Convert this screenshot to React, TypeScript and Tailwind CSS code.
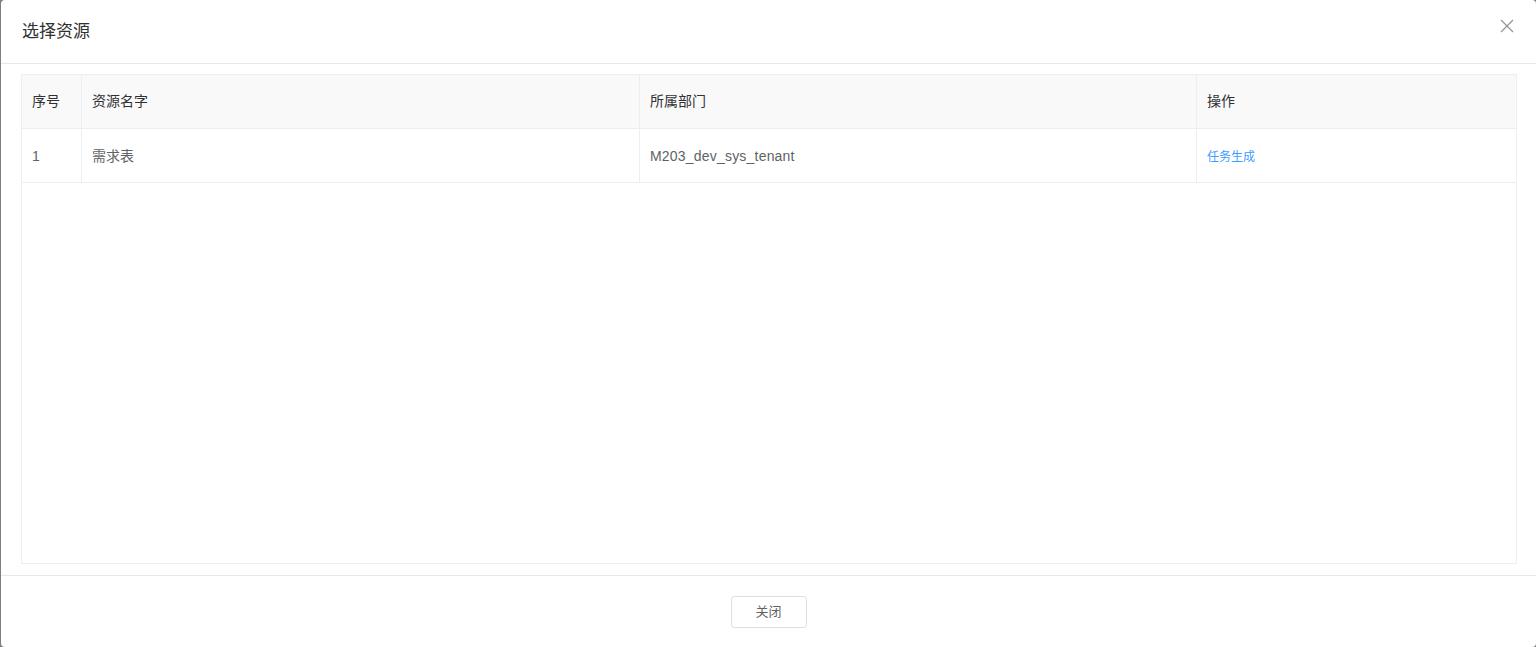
import React from "react";

const font = { fontFamily: '"Liberation Sans", "Noto Sans CJK SC", sans-serif' };

export default function App() {
  return (
    <div className="w-[1536px] h-[647px] bg-[#7f7f7f] flex overflow-hidden" style={font}>
      <div className="ml-[1px] flex-1 h-full bg-white rounded-[4px] flex flex-col">
        <div className="h-[64px] shrink-0 border-b border-[#e8e8e8] flex items-center justify-between pl-[21px] pr-[22px]">
          <span className="text-[17px] text-[#303133] leading-none">选择资源</span>
          <svg width="14" height="14" viewBox="0 0 14 14" className="-mt-[11px]">
            <path d="M1 1 L13 13 M13 1 L1 13" stroke="#909399" strokeWidth="1.2" fill="none" />
          </svg>
        </div>
        <div className="flex-1 pt-[10px] pb-[11px] pl-[20px] pr-[19px] flex">
          <div className="flex-1 border border-[#ebeef5] flex flex-col">
            <div className="flex h-[54px] bg-[#f9f9f9] border-b border-[#ebeef5] text-[14px] text-[#303133]">
              <div className="w-[60px] border-r border-[#ebeef5] flex items-center pl-[10px]">序号</div>
              <div className="w-[558px] border-r border-[#ebeef5] flex items-center pl-[10px]">资源名字</div>
              <div className="w-[557px] border-r border-[#ebeef5] flex items-center pl-[10px]">所属部门</div>
              <div className="flex-1 flex items-center pl-[10px]">操作</div>
            </div>
            <div className="flex h-[54px] border-b border-[#ebeef5] text-[14px] text-[#606266]">
              <div className="w-[60px] border-r border-[#ebeef5] flex items-center pl-[10px] pt-[2px]">1</div>
              <div className="w-[558px] border-r border-[#ebeef5] flex items-center pl-[10px] pt-[2px]">需求表</div>
              <div className="w-[557px] border-r border-[#ebeef5] flex items-center pl-[10px] pt-[2px] tracking-[0.2px]">M203_dev_sys_tenant</div>
              <div className="flex-1 flex items-center pl-[10px] pt-[2px] text-[12px] text-[#409eff]">任务生成</div>
            </div>
          </div>
        </div>
        <div className="h-[72px] shrink-0 border-t border-[#e8e8e8] flex items-start justify-center pt-[20px]">
          <button className="w-[76px] h-[32px] border border-[#dcdfe6] rounded-[3px] bg-white text-[13px] text-[#606266] flex items-center justify-center">关闭</button>
        </div>
      </div>
    </div>
  );
}
